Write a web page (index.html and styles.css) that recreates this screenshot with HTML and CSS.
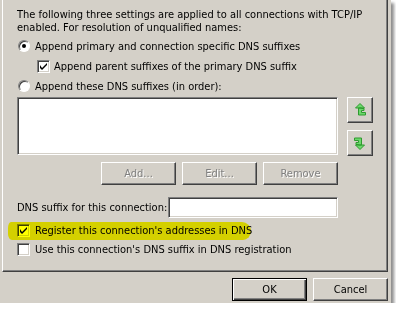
FILE: index.html
```html
<!DOCTYPE html>
<html lang="en">
<head>
    <meta charset="UTF-8">
    <meta name="viewport" content="width=device-width, initial-scale=1.0">
    <title>Advanced TCP/IP Settings - DNS</title>
    <link rel="stylesheet" href="styles.css">
</head>
<body>
    <div class="dialog">
        <div class="tab-page">
            <p class="intro">The following three settings are applied to all connections with TCP/IP<br>enabled. For resolution of unqualified names:</p>

            <div class="option first">
                <span class="radio checked"></span>
                <span>Append primary and connection specific DNS suffixes</span>
            </div>
            <div class="option sub">
                <span class="check">
                    <svg width="7" height="7" viewBox="0 0 7 7"><path d="M0 2 L0 5 L2 7 L7 2 L7 0 L2 5 Z" fill="#000"/></svg>
                </span>
                <span>Append parent suffixes of the primary DNS suffix</span>
            </div>
            <div class="option">
                <span class="radio"></span>
                <span>Append these DNS suffixes (in order):</span>
            </div>

            <div class="list-row">
                <div class="listbox"></div>
                <div class="arrows">
                    <button class="btn arrow">
                        <svg width="26" height="26" viewBox="0 0 26 26"><path d="M13 6.5 L17.5 11 L8.5 11 Z M11.5 11 H14.5 V11.5 H17 V13.5 H14.5 V15.5 H18.5 V18 H11.5 Z" fill="#6cd86c" stroke="#2f9a2f" stroke-width="1" stroke-linejoin="miter"/></svg>
                    </button>
                    <button class="btn arrow">
                        <svg width="26" height="26" viewBox="0 0 26 26"><path d="M13 6.5 L17.5 11 L8.5 11 Z M11.5 11 H14.5 V11.5 H17 V13.5 H14.5 V15.5 H18.5 V18 H11.5 Z" fill="#6cd86c" stroke="#2f9a2f" stroke-width="1" transform="rotate(180 13 13)"/></svg>
                    </button>
                </div>
            </div>

            <div class="list-buttons">
                <button class="btn" disabled>Add...</button>
                <button class="btn" disabled>Edit...</button>
                <button class="btn" disabled>Remove</button>
            </div>

            <div class="suffix-row">
                <label>DNS suffix for this connection:</label>
                <div class="textbox"></div>
            </div>

            <div class="option tight marked">
                <span class="check">
                    <svg width="7" height="7" viewBox="0 0 7 7"><path d="M0 2 L0 5 L2 7 L7 2 L7 0 L2 5 Z" fill="#000"/></svg>
                </span>
                <span>Register this connection's addresses in DNS</span>
                <span class="marker"></span>
            </div>
            <div class="option tight">
                <span class="check"></span>
                <span>Use this connection's DNS suffix in DNS registration</span>
            </div>
        </div>

        <div class="footer">
            <button class="btn default">OK</button>
            <button class="btn">Cancel</button>
        </div>
    </div>
</body>
</html>
```

FILE: styles.css
```css
body {
    margin: 0;
    background: #fff;
    font-family: "DejaVu Sans Condensed", "Liberation Sans", sans-serif;
    font-size: 11px;
    color: #000;
}
.dialog {
    width: 391px;
    height: 303px;
    box-sizing: border-box;
    padding-left: 2px;
    background: #d4d0c8;
    box-shadow: 3px 3px 3px rgba(0, 0, 0, 0.45);
}
.tab-page {
    width: 386px;
    height: 272px;
    box-sizing: border-box;
    padding: 8px 0 0 14px;
    border-left: 1px solid #fff;
    border-right: 1px solid #404040;
    border-bottom: 1px solid #404040;
    box-shadow: inset -1px -1px #808080;
}
.intro {
    margin: 0;
    line-height: 13px;
}
.option {
    display: flex;
    align-items: center;
    gap: 5px;
    height: 20px;
    white-space: nowrap;
}
.option.first {
    margin-top: 2px;
}
.option.sub {
    padding-left: 20px;
    gap: 4px;
}
.option.tight {
    height: 19px;
}
.marked {
    position: relative;
    margin-top: 3px;
}
.marker {
    position: absolute;
    left: -9px;
    top: 1px;
    width: 243px;
    height: 18px;
    background: #ffff00;
    mix-blend-mode: multiply;
    border-radius: 3px 9px 8px 4px / 6px 9px 9px 6px;
    pointer-events: none;
}
.radio {
    width: 12px;
    height: 12px;
    box-sizing: border-box;
    margin-left: 1px;
    border-radius: 50%;
    border: 1px solid;
    border-color: #808080 #fff #fff #808080;
    background: #fff;
    box-shadow: inset 1px 1px #404040;
    display: flex;
    align-items: center;
    justify-content: center;
}
.radio.checked::after {
    content: "";
    width: 4px;
    height: 4px;
    border-radius: 50%;
    background: #000;
}
.check {
    width: 13px;
    height: 13px;
    box-sizing: border-box;
    flex: none;
    border: 1px solid;
    border-color: #808080 #fff #fff #808080;
    box-shadow: inset 1px 1px #404040, inset -1px -1px #d4d0c8;
    background: #fff;
    display: flex;
    align-items: center;
    justify-content: center;
}
.list-row {
    display: flex;
    margin-top: 1px;
}
.listbox {
    width: 321px;
    height: 58px;
    box-sizing: border-box;
    background: #fff;
    border: 1px solid;
    border-color: #808080 #fff #fff #808080;
    box-shadow: inset 1px 1px #404040, inset -1px -1px #d4d0c8;
}
.arrows {
    display: flex;
    flex-direction: column;
    gap: 7px;
    margin-left: 9px;
}
.btn {
    box-sizing: border-box;
    width: 75px;
    height: 23px;
    padding: 0;
    background: #d4d0c8;
    border: 1px solid;
    border-color: #fff #404040 #404040 #fff;
    box-shadow: inset -1px -1px #808080;
    font-family: inherit;
    font-size: 11px;
    color: #000;
}
.btn:disabled {
    color: #808080;
    text-shadow: 1px 1px 0 #fff;
}
.btn.arrow {
    width: 26px;
    height: 26px;
    display: flex;
}
.btn.arrow svg {
    margin: -1px;
}
.btn.default {
    border-color: #000;
    box-shadow: inset 1px 1px #fff, inset -1px -1px #404040, inset -2px -2px #808080;
}
.list-buttons {
    display: flex;
    justify-content: flex-end;
    gap: 6px;
    width: 321px;
    margin-top: 6px;
}
.suffix-row {
    display: flex;
    justify-content: space-between;
    align-items: center;
    width: 321px;
    margin-top: 12px;
}
.textbox {
    width: 170px;
    height: 21px;
    box-sizing: border-box;
    background: #fff;
    border: 1px solid;
    border-color: #808080 #fff #fff #808080;
    box-shadow: inset 1px 1px #404040, inset -1px -1px #d4d0c8;
}
.footer {
    display: flex;
    justify-content: flex-end;
    gap: 6px;
    width: 386px;
    margin-top: 6px;
}
```
